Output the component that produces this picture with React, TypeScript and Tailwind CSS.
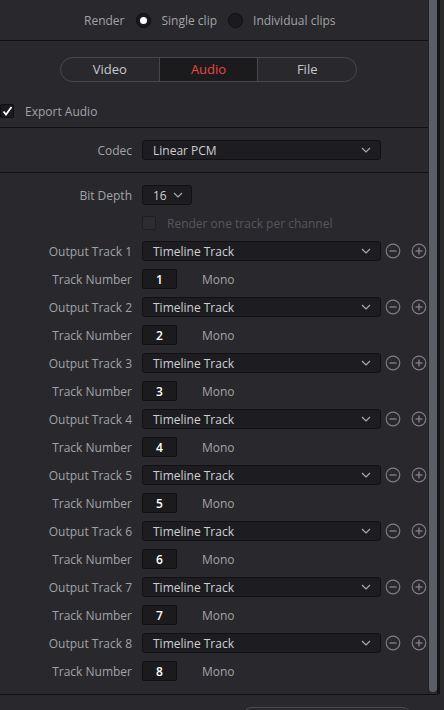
import React from "react";

const font = { fontFamily: '"Open Sans", "Noto Sans", sans-serif' };

function Chevron({ className = "" }: { className?: string }) {
  return (
    <svg width="10" height="6" viewBox="0 0 10 6" className={className}>
      <path d="M1 1 L5 5 L9 1" fill="none" stroke="#a8a8ac" strokeWidth="1.2" />
    </svg>
  );
}

function CircleBtn({ plus }: { plus?: boolean }) {
  return (
    <svg width="16" height="16" viewBox="0 0 16 16">
      <circle cx="8" cy="8" r="6.8" fill="none" stroke="#7e7e83" strokeWidth="1.2" />
      <path d="M4.5 8 H11.5" stroke="#7e7e83" strokeWidth="1.4" />
      {plus && <path d="M8 4.5 V11.5" stroke="#7e7e83" strokeWidth="1.4" />}
    </svg>
  );
}

function Label({ children }: { children: React.ReactNode }) {
  return <div className="w-[132px] shrink-0 pt-px text-right text-[12px] text-[#a3a3a7]">{children}</div>;
}

function Row({ children }: { children: React.ReactNode }) {
  return <div className="flex h-[28px] items-center gap-[10px]">{children}</div>;
}

function Select({ text, width }: { text: string; width: string }) {
  return (
    <div
      className={`flex h-[20px] ${width} items-center justify-between rounded-[3px] border border-[#111113] bg-[#1d1d21] pl-[10px] pr-[9px] text-[12px] text-[#cfcfd3]`}
    >
      <span className="pt-px">{text}</span>
      <Chevron />
    </div>
  );
}

export default function App() {
  const tracks = [1, 2, 3, 4, 5, 6, 7, 8];

  return (
    <div className="h-[710px] w-[444px] overflow-hidden bg-[#28282d]" style={font}>
      <div className="flex h-[694px]">
        <div className="w-[428px] shrink-0">
          {/* render mode */}
          <div className="flex h-[40px] items-center pl-[84px] pt-px text-[12px] text-[#a3a3a7]">
            <span>Render</span>
            <span className="ml-[11px] flex h-[15px] w-[15px] items-center justify-center rounded-full border border-[#0e0e10] bg-[#1b1b1e]">
              <span className="h-[7px] w-[7px] rounded-full bg-white" />
            </span>
            <span className="ml-[11px]">Single clip</span>
            <span className="ml-[11px] h-[15px] w-[15px] rounded-full border border-[#0e0e10] bg-[#1b1b1e]" />
            <span className="ml-[10px]">Individual clips</span>
          </div>
          <div className="h-px bg-[#111113]" />

          {/* tabs + export */}
          <div className="pt-[16px]">
            <div className="ml-[60px] flex h-[25px] w-[297px] overflow-hidden rounded-full border border-[#47474d] text-[13px]">
              <div className="flex flex-1 items-center justify-center text-[#c8c8cc]">Video</div>
              <div className="flex flex-1 items-center justify-center border-x border-[#47474d] bg-[#1b1b1e] text-[#e9473d]">
                Audio
              </div>
              <div className="flex flex-1 items-center justify-center text-[#c8c8cc]">File</div>
            </div>
            <div className="mt-[15px] flex h-[28px] items-center">
              <span className="flex h-[14px] w-[14px] items-center justify-center rounded-[2px] border border-[#0e0e10] bg-[#1b1b1e]">
                <svg width="11" height="10" viewBox="0 0 11 10">
                  <path d="M1.5 5.5 L4 8.5 L9.5 1" fill="none" stroke="#fff" strokeWidth="1.8" />
                </svg>
              </span>
              <span className="ml-[11px] pt-px text-[12px] text-[#a3a3a7]">Export Audio</span>
            </div>
            <div className="h-[2px]" />
          </div>
          <div className="h-px bg-[#111113]" />

          {/* codec */}
          <div className="flex h-[44px] items-center gap-[10px]">
            <Label>Codec</Label>
            <Select text="Linear PCM" width="w-[239px]" />
          </div>
          <div className="h-px bg-[#111113]" />

          {/* tracks */}
          <div className="pt-[8px]">
            <Row>
              <Label>Bit Depth</Label>
              <div className="flex h-[20px] w-[50px] items-center gap-[6px] rounded-[3px] border border-[#111113] bg-[#1d1d21] pl-[10px] text-[12px] text-[#cfcfd3]">
                <span className="pt-px">16</span>
                <Chevron />
              </div>
            </Row>
            <Row>
              <div className="w-[132px] shrink-0" />
              <span className="h-[14px] w-[14px] rounded-[2px] border border-[#1f1f23] bg-[#2c2c31]" />
              <span className="ml-[1px] pt-px text-[12px] text-[#57575c]">Render one track per channel</span>
            </Row>
            {tracks.map((n) => (
              <React.Fragment key={n}>
                <Row>
                  <Label>Output Track {n}</Label>
                  <Select text="Timeline Track" width="w-[239px]" />
                  <div className="ml-[-6px] flex items-center gap-[10px]">
                    <CircleBtn />
                    <CircleBtn plus />
                  </div>
                </Row>
                <Row>
                  <Label>Track Number</Label>
                  <div className="flex h-[20px] w-[35px] items-center rounded-[2px] border border-[#111113] bg-[#1b1b1e] pl-[13px] pt-px text-[12px] font-semibold text-white">
                    {n}
                  </div>
                  <span className="ml-[15px] pt-px text-[12px] text-[#a3a3a7]">Mono</span>
                </Row>
              </React.Fragment>
            ))}
          </div>
        </div>

        {/* scrollbar */}
        <div className="flex w-[16px] shrink-0">
          <div className="w-px bg-[#222226]" />
          <div className="h-[692px] w-[8px] rounded-b-[4px] bg-[#5b5f65]" />
          <div className="w-[3px] bg-[#141416]" />
          <div className="w-[4px] bg-[#2a2a2e]" />
        </div>
      </div>

      <div className="flex">
        <div className="h-px w-[438px] bg-[#111113]" />
        <div className="h-px flex-1 bg-[#2a2a2e]" />
      </div>
      <div className="relative h-[15px]">
        <div className="ml-[242px] mt-[12px] h-[20px] w-[170px] rounded-[10px] border border-[#4a4a50]" />
      </div>
    </div>
  );
}
